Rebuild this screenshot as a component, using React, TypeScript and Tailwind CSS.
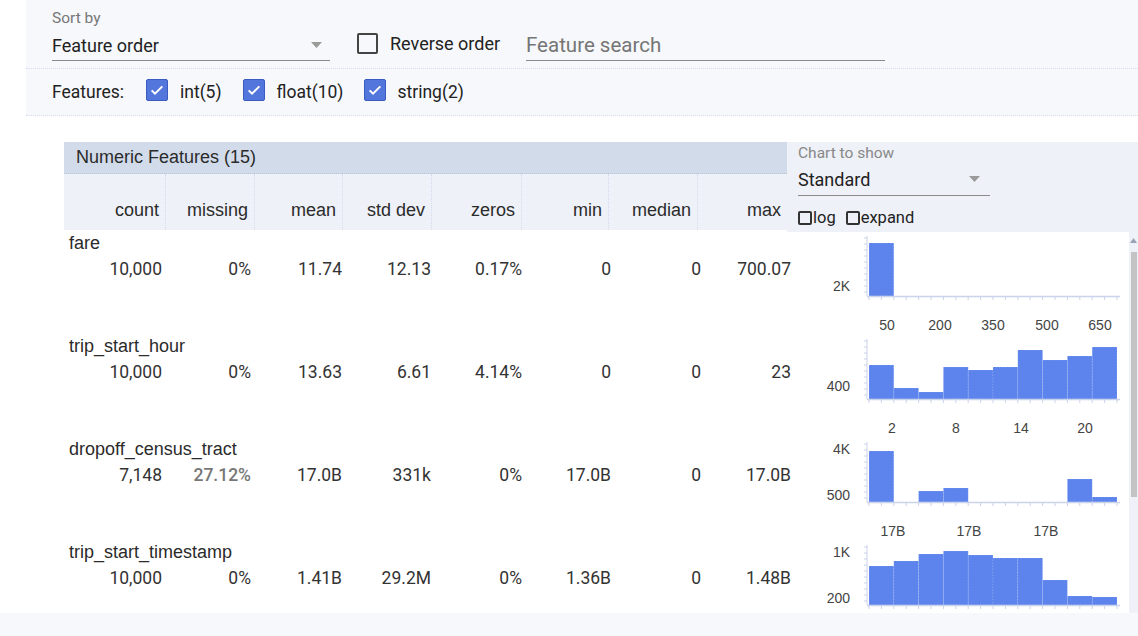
import React from "react";

const BAR = "#5c84ec";

type ChartDef = {
  tops: number[];
  yLabels: { t: string; y: number }[];
  xLabels: { t: string; x: number }[];
};

const charts: ChartDef[] = [
  {
    tops: [11, 64, 64, 64, 64, 64, 64, 64, 64, 64],
    yLabels: [{ t: "2K", y: 54 }],
    xLabels: [
      { t: "50", x: 100 },
      { t: "200", x: 153 },
      { t: "350", x: 206 },
      { t: "500", x: 260 },
      { t: "650", x: 313 },
    ],
  },
  {
    tops: [30, 53, 57, 32, 35, 32, 15, 25, 21, 12],
    yLabels: [{ t: "400", y: 51 }],
    xLabels: [
      { t: "2", x: 105 },
      { t: "8", x: 169 },
      { t: "14", x: 234 },
      { t: "20", x: 298 },
    ],
  },
  {
    tops: [13, 64, 53, 50, 64, 64, 64, 64, 41, 59],
    yLabels: [
      { t: "4K", y: 11 },
      { t: "500", y: 57 },
    ],
    xLabels: [
      { t: "17B", x: 106 },
      { t: "17B", x: 182 },
      { t: "17B", x: 259 },
    ],
  },
  {
    tops: [25, 20, 13, 10, 14, 17, 17, 39, 55, 56],
    yLabels: [
      { t: "1K", y: 11 },
      { t: "200", y: 57 },
    ],
    xLabels: [],
  },
];

function Chart({ def }: { def: ChartDef }) {
  const left = 82;
  const w = 24.8;
  const axisY = 64;
  const yTicks: number[] = [];
  for (let y = 6; y <= axisY; y += 6) yTicks.push(y);
  const xTicks: number[] = [];
  for (let x = left; x <= left + w * 10 + 1; x += 12.4) xTicks.push(x);
  return (
    <svg width={339} height={103} className="block">
      {def.tops.map((t, i) =>
        t < axisY ? (
          <rect
            key={i}
            x={left + i * w}
            y={t}
            width={w}
            height={axisY - t}
            fill={BAR}
            stroke="#ffffff"
            strokeOpacity={0.45}
            strokeWidth={0.6}
            strokeDasharray="1 2"
          />
        ) : null
      )}
      <line x1={80} y1={4} x2={80} y2={axisY} stroke="#c9d3ea" strokeWidth={1} />
      {yTicks.map((y) => (
        <line key={y} x1={77} y1={y} x2={80} y2={y} stroke="#c9d3ea" strokeWidth={1} />
      ))}
      <line x1={80} y1={axisY + 0.5} x2={333} y2={axisY + 0.5} stroke="#c9d3ea" strokeWidth={1.5} />
      {xTicks.map((x, i) => (
        <line key={i} x1={x} y1={axisY} x2={x} y2={axisY + 4} stroke="#c9d3ea" strokeWidth={1} />
      ))}
      {def.yLabels.map((l, i) => (
        <text
          key={i}
          x={63}
          y={l.y + 5}
          textAnchor="end"
          fontSize={14}
          fill="#444"
          fontFamily="'Liberation Sans', Arial, sans-serif"
        >
          {l.t}
        </text>
      ))}
      {def.xLabels.map((l, i) => (
        <text
          key={i}
          x={l.x}
          y={98}
          textAnchor="middle"
          fontSize={14}
          fill="#444"
          fontFamily="'Liberation Sans', Arial, sans-serif"
        >
          {l.t}
        </text>
      ))}
    </svg>
  );
}

function BlueCheck() {
  return (
    <span className="inline-flex h-[22px] w-[22px] items-center justify-center rounded-[2px] border border-[#3a5cc0] bg-[#5376dc]">
      <svg width="16" height="16" viewBox="0 0 24 24" fill="none">
        <path d="M4 12.5l5 5L20 6.5" stroke="#fff" strokeWidth="3" />
      </svg>
    </span>
  );
}

function Arrow() {
  return (
    <svg width="11" height="6" viewBox="0 0 11 6">
      <path d="M0 0h11L5.5 6z" fill="#9a9a9a" />
    </svg>
  );
}

const rows = [
  { name: "fare", vals: ["10,000", "0%", "11.74", "12.13", "0.17%", "0", "0", "700.07"] },
  { name: "trip_start_hour", vals: ["10,000", "0%", "13.63", "6.61", "4.14%", "0", "0", "23"] },
  { name: "dropoff_census_tract", vals: ["7,148", "27.12%", "17.0B", "331k", "0%", "17.0B", "0", "17.0B"] },
  { name: "trip_start_timestamp", vals: ["10,000", "0%", "1.41B", "29.2M", "0%", "1.36B", "0", "1.48B"] },
];

const headers = ["count", "missing", "mean", "std dev", "zeros", "min", "median", "max"];
const headerW = ["w-[102px]", "w-[89px]", "w-[88px]", "w-[89px]", "w-[90px]", "w-[87px]", "w-[89px]", "w-[89px]"];
const valW = ["w-[98px]", "w-[89px]", "w-[91px]", "w-[89px]", "w-[91px]", "w-[89px]", "w-[90px]", "w-[90px]"];

export default function App() {
  return (
    <div className="h-[636px] w-[1138px] overflow-hidden bg-[#f6f8fb] font-['Roboto',sans-serif] text-[#222]">
      {/* top controls */}
      <div className="flex">
        <div className="w-[26px] bg-white" />
        <div className="flex-1">
          <div className="flex h-[69px] border-b border-dotted border-[#d5ddec] pl-[26px]">
            <div className="w-[278px] pt-[8px]">
              <div className="text-[15.5px] leading-[20px] text-[#777]">Sort by</div>
              <div className="flex h-[33px] items-center justify-between border-b border-[#8a8a8a] pr-[8px] pt-[2px]">
                <span className="text-[18px] text-[#222]">Feature order</span>
                <Arrow />
              </div>
            </div>
            <div className="ml-[27px] flex w-[169px] items-center pt-[18px]">
              <span className="h-[21px] w-[21px] rounded-[2px] border-2 border-[#444]" />
              <span className="ml-[12px] text-[18px] text-[#222]">Reverse order</span>
            </div>
            <div className="mt-[28px] flex h-[33px] w-[359px] items-center border-b border-[#8a8a8a] pt-[2px]">
              <span className="text-[20.5px] text-[#757575]">Feature search</span>
            </div>
          </div>
          <div className="flex h-[47px] items-center border-b border-dotted border-[#d5ddec] pl-[26px] text-[17.5px] text-[#222]">
            <span>Features:</span>
            <span className="ml-[22px]"><BlueCheck /></span>
            <span className="ml-[12px]">int(5)</span>
            <span className="ml-[21px]"><BlueCheck /></span>
            <span className="ml-[12px]">float(10)</span>
            <span className="ml-[21px]"><BlueCheck /></span>
            <span className="ml-[11px]">string(2)</span>
          </div>
        </div>
      </div>

      {/* main */}
      <div className="h-[497px] overflow-hidden bg-white pl-[64px] pt-[26px]">
        {/* header */}
        <div className="flex">
          <div className="w-[723px]">
            <div className="flex h-[32px] items-center border-b border-dotted border-[#b9c6de] bg-[#d2dbea] pl-[12px] font-['Liberation_Sans',Arial,sans-serif] text-[18px] text-[#2b2b2b]">
              Numeric Features (15)
            </div>
            <div className="flex h-[56px] bg-[#eef1f7] font-['Liberation_Sans',Arial,sans-serif] text-[18px] text-[#2b2b2b]">
              {headers.map((h, i) => (
                <div
                  key={h}
                  className={`${headerW[i]} flex items-end justify-end pb-[10px] pr-[6px] leading-[20px] ${
                    i < 7 ? "border-r border-dotted border-[#d3dbea]" : ""
                  }`}
                >
                  {h}
                </div>
              ))}
            </div>
          </div>
          <div className="h-[90px] flex-1 bg-[#eef1f7] pl-[11px] pt-[1px]">
            <div className="text-[15.5px] leading-[20px] text-[#888]">Chart to show</div>
            <div className="flex h-[33px] w-[192px] items-center justify-between border-b border-[#8a8a8a] pr-[10px]">
              <span className="text-[18px] text-[#222]">Standard</span>
              <Arrow />
            </div>
            <div className="mt-[12px] flex h-[20px] items-center text-[16.5px] text-[#222]">
              <span className="h-[14px] w-[14px] rounded-[2px] border-2 border-[#333]" />
              <span className="ml-[1px]">log</span>
              <span className="ml-[10px] h-[14px] w-[14px] rounded-[2px] border-2 border-[#333]" />
              <span className="ml-[1px]">expand</span>
            </div>
          </div>
        </div>

        {/* body */}
        <div className="flex">
          <div className="w-[1062px]">
            {rows.map((r, idx) => (
              <div key={r.name} className="flex h-[103px]">
                <div className="w-[723px] pl-[5px] pt-[1px]">
                  <div className="font-['Liberation_Sans',Arial,sans-serif] text-[18px] leading-[20px] text-[#2b2b2b]">
                    {r.name}
                  </div>
                  <div className="-ml-[5px] mt-[6px] flex text-[17.5px] leading-[20px] text-[#333]">
                    {r.vals.map((v, i) => (
                      <div
                        key={i}
                        className={`${valW[i]} shrink-0 text-right ${
                          v === "27.12%" ? "font-medium text-[#777]" : ""
                        }`}
                      >
                        {v}
                      </div>
                    ))}
                  </div>
                </div>
                <Chart def={charts[idx]} />
              </div>
            ))}
          </div>
          <div className="ml-[3px] flex h-[391px] w-[9px] flex-col items-center bg-[#eef1f7] pt-[6px]">
            <svg width="7" height="5" viewBox="0 0 7 5">
              <path d="M0 5L3.5 0 7 5z" fill="#9aa3b5" />
            </svg>
            <div className="mt-[9px] h-[245px] w-[6px] bg-[#c3c3c3]" />
          </div>
        </div>
      </div>
    </div>
  );
}
